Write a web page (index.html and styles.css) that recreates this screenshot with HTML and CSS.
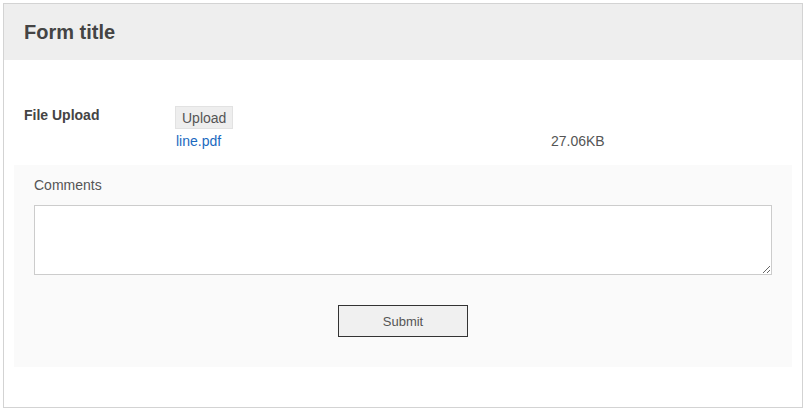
FILE: index.html
```html
<!DOCTYPE html>
<html lang="en">
<head>
    <meta charset="UTF-8">
    <meta name="viewport" content="width=device-width, initial-scale=1.0">
    <title>Form title</title>
    <link rel="stylesheet" href="styles.css">
</head>
<body>
    <form class="form">
        <h1 class="form-title">Form title</h1>
        <div class="form-body">
            <div class="field-row">
                <label class="field-label">File Upload</label>
                <div class="field-value">
                    <button type="button" class="upload-btn">Upload</button>
                    <div class="file-list">
                        <a href="#" class="file-name">line.pdf</a>
                        <span class="file-size">27.06KB</span>
                    </div>
                </div>
            </div>
            <div class="comments">
                <label for="comments" class="comments-label">Comments</label>
                <textarea id="comments" name="comments"></textarea>
                <div class="actions">
                    <button type="submit" class="submit-btn">Submit</button>
                </div>
            </div>
        </div>
    </form>
</body>
</html>
```

FILE: styles.css
```css
body {
    margin: 3px;
    font-family: "Liberation Sans", Arial, sans-serif;
    color: #555;
    background: #fff;
}

.form {
    box-sizing: border-box;
    width: 800px;
    height: 405px;
    border: 1px solid #d3d3d3;
}

.form-title {
    margin: 0;
    height: 56px;
    line-height: 56px;
    padding: 0 20px;
    background-color: #eee;
    font-size: 20px;
    color: #444;
}

.form-body {
    padding: 10px;
}

.field-row {
    display: flex;
    padding: 36px 10px 0;
}

.field-label {
    width: 151px;
    font-size: 14px;
    font-weight: bold;
    color: #444;
    padding-top: 1px;
}

.upload-btn {
    font-family: inherit;
    font-size: 14px;
    color: #555;
    background: #eee;
    border: 1px solid #e2e2e2;
    border-radius: 0;
    height: 23px;
    padding: 0 6px;
    margin: 0;
}

.file-list {
    display: grid;
    grid-template-columns: 376px auto;
    font-size: 14px;
    line-height: 16px;
    margin-top: 4px;
}

.file-name {
    color: #1b6ac0;
    text-decoration: none;
    padding-left: 1px;
}

.file-size {
    color: #555;
}

.comments {
    margin-top: 16px;
    background-color: #fafafa;
    padding: 12px 20px 30px;
}

.comments-label {
    display: block;
    font-size: 14px;
    color: #555;
    line-height: 16px;
}

.comments textarea {
    display: block;
    box-sizing: border-box;
    width: 100%;
    height: 70px;
    margin-top: 12px;
    border: 1px solid #ccc;
    background: #fff;
}

.actions {
    text-align: center;
    margin-top: 30px;
}

.submit-btn {
    box-sizing: border-box;
    width: 130px;
    height: 32px;
    font-family: inherit;
    font-size: 13px;
    color: #555;
    background: #f0f0f0;
    border: 1px solid #333;
    border-radius: 0;
}
```
